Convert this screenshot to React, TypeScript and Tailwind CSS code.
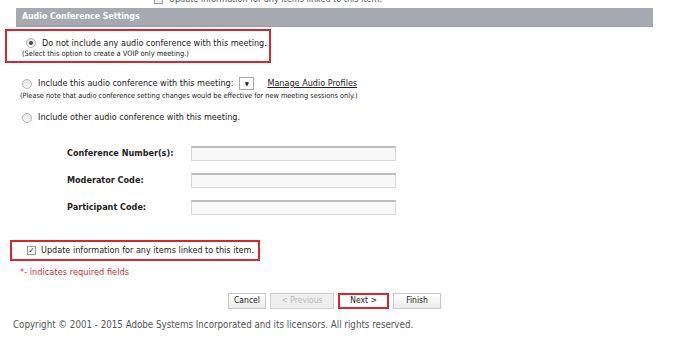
import React from 'react';

function Radio({ checked }: { checked?: boolean }) {
  return (
    <span className="inline-flex w-[10px] h-[10px] rounded-full border border-[#b5b5b5] bg-gradient-to-b from-[#e4e4e4] to-[#fafafa] items-center justify-center shrink-0">
      {checked && <span className="w-[4px] h-[4px] rounded-full bg-[#444]" />}
    </span>
  );
}

function Field({ label }: { label: string }) {
  return (
    <div className="flex items-center h-[15px]">
      <div className="w-[124px] font-bold text-[9px] text-[#222]">{label}</div>
      <div className="w-[205px] h-[15px] border border-[#d8d8d8] border-t-[#bdbdbd] border-t-2 bg-[#f8f8f8]" />
    </div>
  );
}

function Btn({ label, disabled, active }: { label: string; disabled?: boolean; active?: boolean }) {
  return (
    <div
      className={
        'h-[16px] flex items-center justify-center text-[8.5px] ' +
        (active
          ? 'border-2 border-[#d9262e] bg-white text-[#222] '
          : disabled
          ? 'border border-[#d0d0d0] bg-[#efefef] text-[#b8b8b8] '
          : 'border border-[#c8c8c8] bg-gradient-to-b from-white to-[#ececec] text-[#222] ')
      }
    >
      {label}
    </div>
  );
}

export default function App() {
  return (
    <div
      className="w-[700px] h-[340px] overflow-hidden bg-white text-[#222]"
      style={{ fontFamily: '"DejaVu Sans Condensed", "DejaVu Sans", Verdana, sans-serif' }}
    >
      <div className="h-[8px] overflow-hidden">
        <div className="flex items-center gap-[6px] ml-[154px] -mt-[7px] text-[9px] text-[#555]">
          <span className="w-[9px] h-[9px] border border-[#999] bg-[#eee]" />
          <span>Update information for any items linked to this item.</span>
        </div>
      </div>

      <div className="ml-[16px] w-[637px] h-[19px] bg-[#a6aab0] border-b border-[#999da3] flex items-center px-[6px] text-[8.7px] font-bold text-white">
        Audio Conference Settings
      </div>

      <div className="ml-[5px] mt-[2px] w-[266px] h-[34px] border-2 border-[#d9262e] pl-[15px] pt-[6px]">
        <div className="flex items-center gap-[6px] text-[9px] leading-[12px] ml-[4px]">
          <Radio checked />
          <span>Do not include any audio conference with this meeting.</span>
        </div>
        <div className="text-[7.4px] leading-[10px]">(Select this option to create a VOIP only meeting.)</div>
      </div>

      <div className="ml-[20px] mt-[14px]">
        <div className="flex items-center text-[9px] leading-[13px] ml-[2px]">
          <Radio />
          <span className="ml-[6px]">Include this audio conference with this meeting:</span>
          <span className="ml-[6px] w-[15px] h-[13px] border border-[#aaa] bg-white flex items-center justify-center text-[6px]">▼</span>
          <span className="ml-[13px] underline">Manage Audio Profiles</span>
        </div>
        <div className="text-[7.3px] leading-[10px] mt-[1px]">
          (Please note that audio conference setting changes would be effective for new meeting sessions only.)
        </div>
        <div className="flex items-center gap-[6px] text-[9px] leading-[13px] ml-[2px] mt-[10px]">
          <Radio />
          <span>Include other audio conference with this meeting.</span>
        </div>
      </div>

      <div className="ml-[67px] mt-[22px] flex flex-col gap-[12px]">
        <Field label="Conference Number(s):" />
        <Field label="Moderator Code:" />
        <Field label="Participant Code:" />
      </div>

      <div className="ml-[10px] mt-[25px] w-[250px] h-[21px] border-2 border-[#d9262e] flex items-center pl-[15px] gap-[5px] text-[9px]">
        <span className="w-[9px] h-[9px] border border-[#999] bg-[#f4f4f4] flex items-center justify-center text-[8px] leading-none">✓</span>
        <span>Update information for any items linked to this item.</span>
      </div>

      <div className="ml-[20px] mt-[4px] text-[9.2px] text-[#d2323a]">*- indicates required fields</div>

      <div className="flex ml-[228px] mt-[14px] gap-[4px]">
        <div className="w-[38px]"><Btn label="Cancel" /></div>
        <div className="w-[64px]"><Btn label="< Previous" disabled /></div>
        <div className="w-[51px]"><Btn label="Next >" active /></div>
        <div className="w-[48px]"><Btn label="Finish" /></div>
      </div>

      <div className="ml-[13px] mt-[9px] text-[9.7px] text-[#555]">
        Copyright © 2001 - 2015 Adobe Systems Incorporated and its licensors. All rights reserved.
      </div>
    </div>
  );
}
